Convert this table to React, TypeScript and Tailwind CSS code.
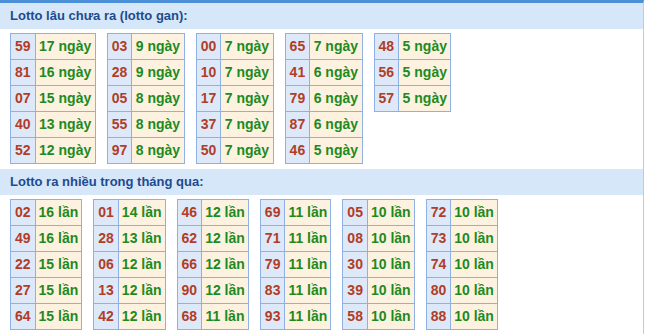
const gan: [string, string][][] = [
  [["59", "17 ngày"], ["81", "16 ngày"], ["07", "15 ngày"], ["40", "13 ngày"], ["52", "12 ngày"]],
  [["03", "9 ngày"], ["28", "9 ngày"], ["05", "8 ngày"], ["55", "8 ngày"], ["97", "8 ngày"]],
  [["00", "7 ngày"], ["10", "7 ngày"], ["17", "7 ngày"], ["37", "7 ngày"], ["50", "7 ngày"]],
  [["65", "7 ngày"], ["41", "6 ngày"], ["79", "6 ngày"], ["87", "6 ngày"], ["46", "5 ngày"]],
  [["48", "5 ngày"], ["56", "5 ngày"], ["57", "5 ngày"]],
];

const nhieu: [string, string][][] = [
  [["02", "16 lần"], ["49", "16 lần"], ["22", "15 lần"], ["27", "15 lần"], ["64", "15 lần"]],
  [["01", "14 lần"], ["28", "13 lần"], ["06", "12 lần"], ["13", "12 lần"], ["42", "12 lần"]],
  [["46", "12 lần"], ["62", "12 lần"], ["66", "12 lần"], ["90", "12 lần"], ["68", "11 lần"]],
  [["69", "11 lần"], ["71", "11 lần"], ["79", "11 lần"], ["83", "11 lần"], ["93", "11 lần"]],
  [["05", "10 lần"], ["08", "10 lần"], ["30", "10 lần"], ["39", "10 lần"], ["58", "10 lần"]],
  [["72", "10 lần"], ["73", "10 lần"], ["74", "10 lần"], ["80", "10 lần"], ["88", "10 lần"]],
];

const LotoTable = ({ rows, valPad }: { rows: [string, string][]; valPad: string }) => {
  return (
    <table className="border-collapse self-start">
      <tbody>
        {rows.map(([num, val], i) => (
          <tr key={i}>
            <td className="border border-[#8fb0e3] bg-[#dde9f9] px-1 py-1 text-center leading-[17px] text-[#b13d27]">
              {num}
            </td>
            <td className={`${valPad} border border-[#8fb0e3] bg-[#fdf2e0] py-1 text-center leading-[17px] text-[#1e8a1e]`}>
              {val}
            </td>
          </tr>
        ))}
      </tbody>
    </table>
  );
};

const Section = ({
  title,
  tables,
  top,
  valPad,
}: {
  title: string;
  tables: [string, string][][];
  top: string;
  valPad: string;
}) => {
  return (
    <div>
      <div className={`${top} h-[26px] bg-[#d6e7f9] pl-[10px] text-[13px] font-bold leading-[26px] text-[#1d4b8f]`}>
        {title}
      </div>
      <div className="mt-[4px] flex gap-[11px] pl-[10px]">
        {tables.map((t, i) => (
          <LotoTable key={i} rows={t} valPad={valPad} />
        ))}
      </div>
    </div>
  );
};

export default function App() {
  return (
    <div className="w-[644px] h-[334px] overflow-hidden border-t-[3px] border-r border-t-[#4a8fd8] border-r-[#c9c9c9] bg-white font-['Liberation_Sans',Arial,sans-serif] text-[14px] font-bold">
      <Section title="Lotto lâu chưa ra (lotto gan):" tables={gan} top="" valPad="px-[3.5px]" />
      <Section title="Lotto ra nhiều trong tháng qua:" tables={nhieu} top="mt-[5px]" valPad="px-[3px]" />
    </div>
  );
}
